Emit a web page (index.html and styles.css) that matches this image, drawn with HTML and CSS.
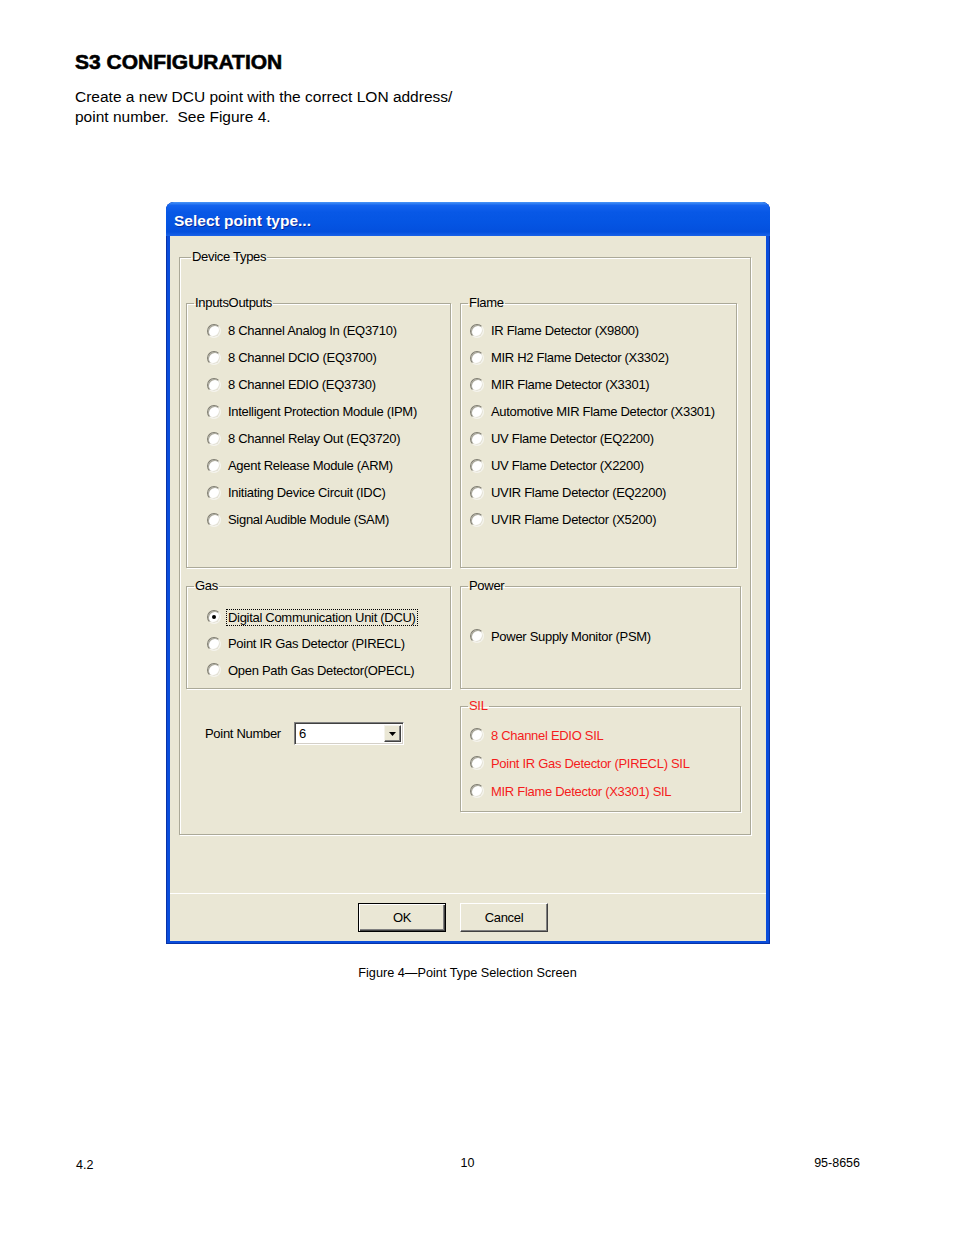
FILE: index.html
```html
<!DOCTYPE html>
<html lang="en">
<head>
<meta charset="utf-8">
<title>S3 Configuration</title>
<link rel="stylesheet" href="styles.css">
</head>
<body>
<div class="page">
  <h1 class="heading">S3 CONFIGURATION</h1>
  <p class="intro">Create a new DCU point with the correct LON address/<br>point number.&nbsp; See Figure 4.</p>

  <div class="window">
    <div class="titlebar">Select point type...</div>
    <div class="client">
      <fieldset class="group device">
        <legend class="legend legend-device">Device Types</legend>
        <div class="device-grid">
          <fieldset class="group io">
            <legend class="legend">InputsOutputs</legend>
            <div class="opts opts-io">
              <div class="opt"><span class="radio"></span><span>8 Channel Analog In (EQ3710)</span></div>
              <div class="opt"><span class="radio"></span><span>8 Channel DCIO (EQ3700)</span></div>
              <div class="opt"><span class="radio"></span><span>8 Channel EDIO (EQ3730)</span></div>
              <div class="opt"><span class="radio"></span><span>Intelligent Protection Module (IPM)</span></div>
              <div class="opt"><span class="radio"></span><span>8 Channel Relay Out (EQ3720)</span></div>
              <div class="opt"><span class="radio"></span><span>Agent Release Module (ARM)</span></div>
              <div class="opt"><span class="radio"></span><span>Initiating Device Circuit (IDC)</span></div>
              <div class="opt"><span class="radio"></span><span>Signal Audible Module (SAM)</span></div>
            </div>
          </fieldset>
          <fieldset class="group flame">
            <legend class="legend">Flame</legend>
            <div class="opts opts-right opts-io">
              <div class="opt"><span class="radio"></span><span>IR Flame Detector (X9800)</span></div>
              <div class="opt"><span class="radio"></span><span>MIR H2 Flame Detector (X3302)</span></div>
              <div class="opt"><span class="radio"></span><span>MIR Flame Detector (X3301)</span></div>
              <div class="opt"><span class="radio"></span><span>Automotive MIR Flame Detector (X3301)</span></div>
              <div class="opt"><span class="radio"></span><span>UV Flame Detector (EQ2200)</span></div>
              <div class="opt"><span class="radio"></span><span>UV Flame Detector (X2200)</span></div>
              <div class="opt"><span class="radio"></span><span>UVIR Flame Detector (EQ2200)</span></div>
              <div class="opt"><span class="radio"></span><span>UVIR Flame Detector (X5200)</span></div>
            </div>
          </fieldset>
          <fieldset class="group gas">
            <legend class="legend">Gas</legend>
            <div class="opts opts-gas">
              <div class="opt"><span class="radio checked"></span><span class="focus">Digital Communication Unit (DCU)</span></div>
              <div class="opt"><span class="radio"></span><span>Point IR Gas Detector (PIRECL)</span></div>
              <div class="opt"><span class="radio"></span><span>Open Path Gas Detector(OPECL)</span></div>
            </div>
          </fieldset>
          <fieldset class="group power">
            <legend class="legend">Power</legend>
            <div class="opts opts-right opts-power">
              <div class="opt"><span class="radio"></span><span>Power Supply Monitor (PSM)</span></div>
            </div>
          </fieldset>
          <div class="pointnum">
            <span class="pointnum-label">Point Number</span>
            <div class="combo">
              <span class="combo-val">6</span>
              <span class="combo-btn"><svg width="7" height="4" viewBox="0 0 7 4"><path d="M0 0H7L3.5 4Z" fill="#000"/></svg></span>
            </div>
          </div>
          <fieldset class="group sil">
            <legend class="legend legend-red">SIL</legend>
            <div class="opts opts-right opts-sil">
              <div class="opt red"><span class="radio"></span><span>8 Channel EDIO SIL</span></div>
              <div class="opt red"><span class="radio"></span><span>Point IR Gas Detector (PIRECL) SIL</span></div>
              <div class="opt red"><span class="radio"></span><span>MIR Flame Detector (X3301) SIL</span></div>
            </div>
          </fieldset>
        </div>
      </fieldset>
      <div class="footer">
        <button class="btn btn-default">OK</button>
        <button class="btn">Cancel</button>
      </div>
    </div>
  </div>

  <p class="caption">Figure 4—Point Type Selection Screen</p>
  <div class="pagefoot">
    <span class="pf-left">4.2</span>
    <span class="pf-mid">10</span>
    <span class="pf-right">95-8656</span>
  </div>
</div>
</body>
</html>
```

FILE: styles.css
```css
body {
  margin: 0;
  background: #fff;
  color: #000;
  font-family: "Liberation Sans", Arial, sans-serif;
}

.page {
  padding: 50px 94px 0 75px;
}

.heading {
  margin: 0;
  font-size: 21px;
  line-height: 24px;
  font-weight: bold;
  -webkit-text-stroke: 0.6px #000;
}

.intro {
  margin: 13px 0 0;
  font-size: 15.5px;
  line-height: 20px;
}

/* ---------- dialog window ---------- */
.window {
  margin: 75px 0 0 91px;
  width: 604px;
  background: #0a4ddb;
  border-radius: 8px 8px 0 0;
  box-shadow: inset 0 0 0 1px #0833a8;
  overflow: hidden;
}

.titlebar {
  height: 34px;
  box-sizing: border-box;
  padding: 3px 0 0 8px;
  display: flex;
  align-items: center;
  color: #fff;
  font-size: 15.5px;
  font-weight: bold;
  text-shadow: 1px 1px 0 #0a2a9a;
  background: linear-gradient(to bottom, #4a96f7 0%, #1463ee 10%, #0858e6 30%, #0555e3 60%, #0450dd 88%, #1a62e8 100%);
}

.client {
  margin: 0 4px 3px 4px;
  background: #eae7d5;
  padding: 14px 15px 0 9px;
  font-size: 13px;
  letter-spacing: -0.3px;
}

/* ---------- group boxes ---------- */
.group {
  margin: 0;
  padding: 0;
  min-width: 0;
  box-sizing: border-box;
  border: 1px solid #aba998;
  box-shadow: 1px 1px 0 #fff, inset 1px 1px 0 #fff;
}

.legend {
  margin-left: 7px;
  padding: 0 1px;
  line-height: 14px;
  font-size: 13px;
}

.legend-device {
  margin-left: 11px;
}

.legend-red {
  color: #f51c1c;
}

.device {
  height: 585px;
}

.device-grid {
  display: grid;
  grid-template-columns: 265px 281px;
  grid-template-rows: 272px 110px 112px;
  column-gap: 9px;
  row-gap: 11px;
  padding: 32px 9px 0 6px;
}

.device-grid > .pointnum,
.device-grid > .sil {
  margin-top: -1px;
}

.flame {
  width: 277px;
}

.opts {
  padding-left: 20px;
}

.opts-right {
  padding-left: 9px;
}

.opts-io {
  padding-top: 7px;
}

.opts-io .opt {
  height: 27px;
}

.opts-gas {
  padding-top: 11px;
}

.opts-gas .opt {
  height: 26.5px;
}

.opts-power {
  padding-top: 29.5px;
}

.opts-power .opt {
  height: 27px;
}

.opts-sil {
  padding-top: 8px;
}

.opts-sil .opt {
  height: 28px;
}

.opt {
  display: flex;
  align-items: center;
  white-space: nowrap;
}

.opt.red {
  color: #f51c1c;
}

.radio {
  flex: none;
  width: 12px;
  height: 12px;
  margin-right: 7px;
  border-radius: 50%;
  border: 1px solid;
  border-color: #7e7c70 #f4f3ec #f4f3ec #7e7c70;
  background: #fff;
  box-shadow: inset 1px 1px 0 #a9a799, inset -1px -1px 0 #e4e2d6;
  display: flex;
  align-items: center;
  justify-content: center;
}

.radio.checked::after {
  content: "";
  width: 4px;
  height: 4px;
  border-radius: 50%;
  background: #000;
}

.focus {
  outline: 1px dotted #000;
  outline-offset: 0;
  padding: 0 1px;
  margin-left: -1px;
}

/* ---------- point number ---------- */
.pointnum {
  display: flex;
  align-items: flex-start;
  padding: 23px 0 0 19px;
}

.pointnum-label {
  width: 89px;
  line-height: 23px;
}

.combo {
  width: 110px;
  height: 23px;
  box-sizing: border-box;
  display: flex;
  background: #fff;
  border: 1px solid;
  border-color: #808080 #fff #fff #808080;
  box-shadow: inset 1px 1px 0 #404040, inset -1px -1px 0 #d4d0c8;
}

.combo-val {
  padding-left: 4px;
  line-height: 21px;
}

.combo-btn {
  margin: 2px 2px 2px auto;
  width: 17px;
  box-sizing: border-box;
  background: #eae7d5;
  border: 1px solid;
  border-color: #f4f3ec #404040 #404040 #f4f3ec;
  box-shadow: inset -1px -1px 0 #808080;
  display: flex;
  align-items: center;
  justify-content: center;
}

/* ---------- footer buttons ---------- */
.footer {
  margin: 58px -15px 0 -9px;
  border-top: 1px solid #fff;
  padding: 9px 0 9px 188px;
  display: flex;
  gap: 14px;
}

.btn {
  width: 88px;
  height: 29px;
  padding: 0;
  font-family: "Liberation Sans", Arial, sans-serif;
  font-size: 13px;
  letter-spacing: -0.3px;
  color: #000;
  background: #eae7d5;
  border: 1px solid;
  border-color: #fff #404040 #404040 #fff;
  box-shadow: inset -1px -1px 0 #808080;
}

.btn-default {
  border: 1px solid #000;
  box-shadow: inset 1px 1px 0 #fff, inset -1px -1px 0 #404040, inset -2px -2px 0 #808080;
}

/* ---------- caption and page footer ---------- */
.caption {
  margin: 21px 0 0;
  text-align: center;
  font-size: 12.7px;
  line-height: 16px;
}

.pagefoot {
  margin-top: 174px;
  display: grid;
  grid-template-columns: 1fr auto 1fr;
  font-size: 12.5px;
  line-height: 16px;
}

.pf-left {
  padding: 2px 0 0 1px;
}

.pf-right {
  text-align: right;
}
```
